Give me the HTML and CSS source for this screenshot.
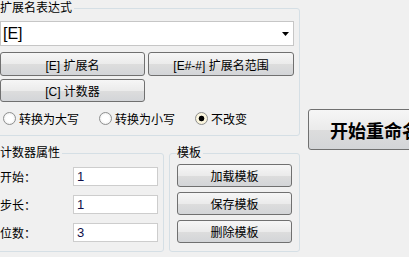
FILE: index.html
```html
<!DOCTYPE html>
<html lang="zh-CN">
<head>
  <meta charset="UTF-8">
  <title>扩展名</title>
  <link rel="stylesheet" href="styles.css">
</head>
<body>
  <div class="window">
    <div class="main">
      <fieldset class="group group-ext">
        <legend>扩展名表达式</legend>
        <div class="combo">
          <span class="combo-value">[E]</span>
          <svg class="combo-arrow" width="7" height="4" viewBox="0 0 7 4"><path d="M0 0h7L3.5 4z" fill="#000"/></svg>
        </div>
        <div class="btn-row">
          <button class="btn btn-wide">[E] 扩展名</button>
          <button class="btn btn-fill">[E#-#] 扩展名范围</button>
        </div>
        <div class="btn-row btn-row-tight">
          <button class="btn btn-wide btn-short">[C] 计数器</button>
        </div>
        <div class="radio-row">
          <label class="radio"><span class="radio-dot"></span>转换为大写</label>
          <label class="radio"><span class="radio-dot"></span>转换为小写</label>
          <label class="radio"><span class="radio-dot checked"></span>不改变</label>
        </div>
      </fieldset>

      <div class="group-row">
        <fieldset class="group group-counter">
          <legend>计数器属性</legend>
          <div class="field-row">
            <span class="field-label">开始：</span>
            <input class="field-input" type="text" value="1">
          </div>
          <div class="field-row">
            <span class="field-label">步长：</span>
            <input class="field-input" type="text" value="1">
          </div>
          <div class="field-row">
            <span class="field-label">位数：</span>
            <input class="field-input" type="text" value="3">
          </div>
        </fieldset>

        <fieldset class="group group-template">
          <legend>模板</legend>
          <button class="btn btn-block">加载模板</button>
          <button class="btn btn-block">保存模板</button>
          <button class="btn btn-block">删除模板</button>
        </fieldset>
      </div>
    </div>

    <button class="btn btn-start">开始重命名</button>
  </div>
</body>
</html>
```

FILE: styles.css
```css
body {
  margin: 0;
  background-color: #f0f0f0;
  font-family: "Liberation Sans", "Noto Sans CJK SC", sans-serif;
  font-size: 12px;
  color: #000;
  overflow: hidden;
}

.window {
  display: flex;
  align-items: flex-start;
  margin-left: -6px;
}

.main {
  width: 306px;
  flex-shrink: 0;
  display: flex;
  flex-direction: column;
  gap: 9px;
}

.group {
  margin: 0;
  min-width: 0;
  box-sizing: border-box;
  border: 1px solid #d5dfe5;
  border-radius: 3px;
  padding: 0 5px 9px;
}

.group legend {
  padding: 0 2px 0 0;
  font-size: 12px;
  line-height: 16px;
}

.combo {
  margin-top: 5px;
  height: 25px;
  box-sizing: border-box;
  border: 1px solid #c6c6c6;
  background-color: #fff;
  display: flex;
  align-items: center;
  justify-content: space-between;
  padding: 0 4px 0 2px;
}

.combo-value {
  font-size: 16px;
}

.btn-row {
  display: flex;
  gap: 3px;
  margin-top: 6px;
}

.btn-row-tight {
  margin-top: 3px;
}

.btn {
  font: inherit;
  color: #000;
  height: 24px;
  padding: 0;
  box-sizing: border-box;
  border: 1px solid #707070;
  border-radius: 3px;
  background: linear-gradient(#f6f6f6 0%, #ebebeb 50%, #dddddd 51%, #d3d5d8 100%);
}

.btn-wide {
  width: 145px;
}

.btn-fill {
  flex: 1;
}

.btn-short {
  height: 23px;
}

.radio-row {
  display: flex;
  align-items: center;
  gap: 20px;
  height: 16px;
  margin-top: 8px;
  padding-left: 3px;
}

.radio {
  display: flex;
  align-items: center;
  gap: 3px;
}

.radio-dot {
  width: 13px;
  height: 13px;
  box-sizing: border-box;
  border: 1px solid #8e8f8f;
  border-radius: 50%;
  background: radial-gradient(circle, #ffffff 40%, #e6e6e6 100%);
}

.radio-dot.checked {
  background: radial-gradient(circle, #000 0 2.5px, #fdf8e2 3.2px, #f2ecd0 100%);
}

.group-row {
  display: flex;
  gap: 5px;
}

.group-counter {
  width: 170px;
}

.field-row {
  display: flex;
  align-items: center;
  margin-top: 9px;
}

.field-row:first-of-type {
  margin-top: 6px;
}

.field-label {
  width: 73px;
}

.field-input {
  width: 85px;
  height: 19px;
  box-sizing: border-box;
  margin: 0;
  border: 1px solid #cdcdcd;
  padding: 0 3px;
  background-color: #fff;
  font: inherit;
  font-size: 13px;
  color: #10104a;
}

.group-template {
  width: 131px;
  padding: 0 7px 8px;
  display: flex;
  flex-direction: column;
  gap: 5px;
}

.btn-block {
  width: 100%;
  height: 23px;
}

.btn-block:first-of-type {
  margin-top: 3px;
}

.btn-start {
  flex-shrink: 0;
  width: 134px;
  height: 41px;
  margin-top: 109px;
  margin-left: 8px;
  font-size: 18px;
  font-weight: bold;
}
```
